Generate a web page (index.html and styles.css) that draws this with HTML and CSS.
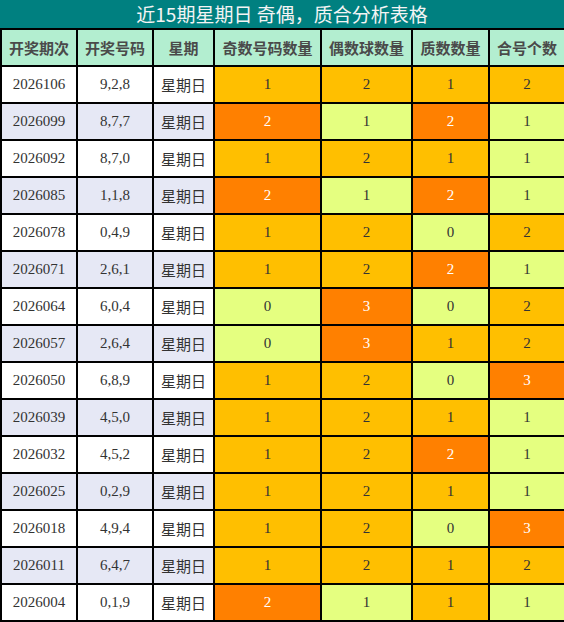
FILE: index.html
```html
<!DOCTYPE html>
<html lang="zh">
<head>
<meta charset="utf-8">
<title>近15期星期日 奇偶，质合分析表格</title>
<link rel="stylesheet" href="styles.css">
</head>
<body>
<div class="wrap">
  <div class="title">近15期星期日 奇偶，质合分析表格</div>
  <table class="grid">
    <colgroup>
      <col class="c1"><col class="c2"><col class="c3"><col class="c4"><col class="c5"><col class="c6"><col class="c7">
    </colgroup>
    <thead>
      <tr><th>开奖期次</th><th>开奖号码</th><th>星期</th><th>奇数号码数量</th><th>偶数球数量</th><th>质数数量</th><th>合号个数</th></tr>
    </thead>
    <tbody>
      <tr><td class="num">2026106</td><td class="num">9,2,8</td><td class="wk">星期日</td><td class="v am">1</td><td class="v am">2</td><td class="v am">1</td><td class="v am">2</td></tr>
      <tr class="alt"><td class="num">2026099</td><td class="num">8,7,7</td><td class="wk">星期日</td><td class="v or">2</td><td class="v lt">1</td><td class="v or">2</td><td class="v lt">1</td></tr>
      <tr><td class="num">2026092</td><td class="num">8,7,0</td><td class="wk">星期日</td><td class="v am">1</td><td class="v am">2</td><td class="v am">1</td><td class="v lt">1</td></tr>
      <tr class="alt"><td class="num">2026085</td><td class="num">1,1,8</td><td class="wk">星期日</td><td class="v or">2</td><td class="v lt">1</td><td class="v or">2</td><td class="v lt">1</td></tr>
      <tr><td class="num">2026078</td><td class="num">0,4,9</td><td class="wk">星期日</td><td class="v am">1</td><td class="v am">2</td><td class="v lt">0</td><td class="v am">2</td></tr>
      <tr class="alt"><td class="num">2026071</td><td class="num">2,6,1</td><td class="wk">星期日</td><td class="v am">1</td><td class="v am">2</td><td class="v or">2</td><td class="v lt">1</td></tr>
      <tr><td class="num">2026064</td><td class="num">6,0,4</td><td class="wk">星期日</td><td class="v lt">0</td><td class="v or">3</td><td class="v lt">0</td><td class="v am">2</td></tr>
      <tr class="alt"><td class="num">2026057</td><td class="num">2,6,4</td><td class="wk">星期日</td><td class="v lt">0</td><td class="v or">3</td><td class="v am">1</td><td class="v am">2</td></tr>
      <tr><td class="num">2026050</td><td class="num">6,8,9</td><td class="wk">星期日</td><td class="v am">1</td><td class="v am">2</td><td class="v lt">0</td><td class="v or">3</td></tr>
      <tr class="alt"><td class="num">2026039</td><td class="num">4,5,0</td><td class="wk">星期日</td><td class="v am">1</td><td class="v am">2</td><td class="v am">1</td><td class="v lt">1</td></tr>
      <tr><td class="num">2026032</td><td class="num">4,5,2</td><td class="wk">星期日</td><td class="v am">1</td><td class="v am">2</td><td class="v or">2</td><td class="v lt">1</td></tr>
      <tr class="alt"><td class="num">2026025</td><td class="num">0,2,9</td><td class="wk">星期日</td><td class="v am">1</td><td class="v am">2</td><td class="v am">1</td><td class="v lt">1</td></tr>
      <tr><td class="num">2026018</td><td class="num">4,9,4</td><td class="wk">星期日</td><td class="v am">1</td><td class="v am">2</td><td class="v lt">0</td><td class="v or">3</td></tr>
      <tr class="alt"><td class="num">2026011</td><td class="num">6,4,7</td><td class="wk">星期日</td><td class="v am">1</td><td class="v am">2</td><td class="v am">1</td><td class="v am">2</td></tr>
      <tr><td class="num">2026004</td><td class="num">0,1,9</td><td class="wk">星期日</td><td class="v or">2</td><td class="v lt">1</td><td class="v am">1</td><td class="v lt">1</td></tr>
    </tbody>
  </table>
</div>
</body>
</html>
```
FILE: styles.css
```css
html, body {
  margin: 0;
  padding: 0;
  background: #ffffff;
}
.wrap {
  width: 564px;
}
.title {
  height: 28px;
  line-height: 28px;
  background: #008080;
  color: #f4f4f4;
  text-align: center;
  font-family: "Noto Sans CJK SC", "Noto Sans", sans-serif;
  font-size: 19px;
}
.grid {
  width: 564px;
  table-layout: fixed;
  border-collapse: collapse;
  border: 2px solid #000;
}
.c1 { width: 76px; }
.c2 { width: 76px; }
.c3 { width: 61px; }
.c4 { width: 107px; }
.c5 { width: 91px; }
.c6 { width: 77px; }
.c7 { width: 76px; }
.grid th, .grid td {
  border: 2px solid #000;
  height: 37px;
  padding: 0;
  text-align: center;
  vertical-align: middle;
  box-sizing: border-box;
}
.grid th {
  background: #b3eed0;
  color: #4a4a4a;
  font-family: "Noto Sans CJK SC", "Noto Sans", sans-serif;
  font-size: 15px;
  font-weight: bold;
}
.grid td {
  background: #ffffff;
  color: #333333;
}
.grid tr.alt td {
  background: #e6e8f5;
}
.num, .v {
  font-family: "Liberation Serif", serif;
  font-size: 15px;
}
.wk {
  font-family: "Noto Sans CJK SC", "Noto Sans", sans-serif;
  font-size: 15px;
  color: #222222;
}
.grid td.am, .grid tr.alt td.am { background: #ffbf00; color: #333333; }
.grid td.or, .grid tr.alt td.or { background: #ff8000; color: #ffffff; }
.grid td.lt, .grid tr.alt td.lt { background: #e5ff80; color: #333333; }
```
